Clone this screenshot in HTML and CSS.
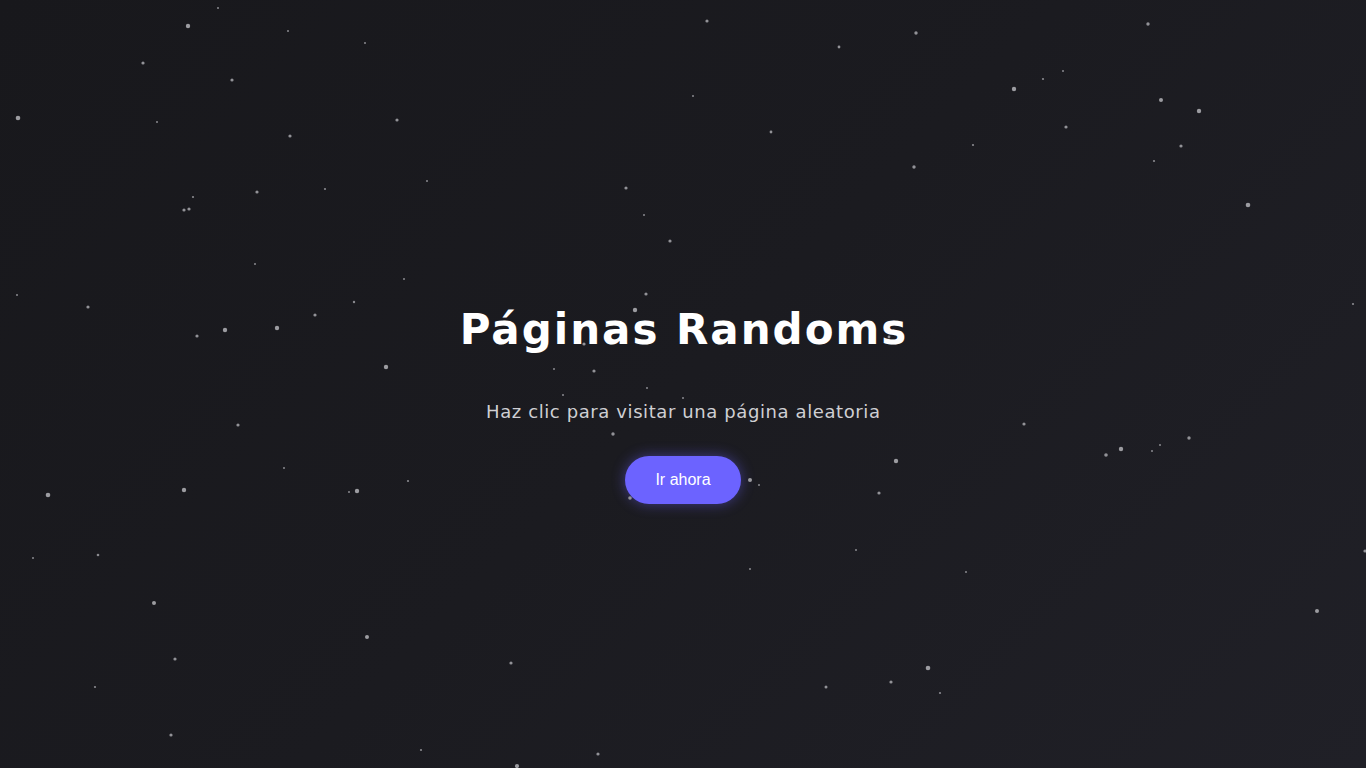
FILE: index.html
```html
<!DOCTYPE html>
<html lang="es">
<head>
<meta charset="utf-8">
<title>Páginas Randoms</title>
<link rel="stylesheet" href="styles.css">
</head>
<body>
<main class="hero">
  <h1 class="title">Páginas Randoms</h1>
  <p class="subtitle">Haz clic para visitar una página aleatoria</p>
  <button class="go-btn" type="button">Ir ahora</button>
</main>
<svg class="stars" viewBox="0 0 1366 768" aria-hidden="true">
  <g class="star-sm">
    <circle cx="218" cy="8" r="1"/><circle cx="288" cy="31" r="1"/><circle cx="365" cy="43" r="1"/>
    <circle cx="157" cy="122" r="1"/><circle cx="427" cy="181" r="1"/><circle cx="193" cy="197" r="1.1"/>
    <circle cx="325" cy="189" r="1.1"/><circle cx="255" cy="264" r="1"/><circle cx="404" cy="279" r="1"/>
    <circle cx="17" cy="295" r="1"/><circle cx="354" cy="302" r="1.2"/><circle cx="693" cy="96" r="1"/>
    <circle cx="644" cy="215" r="1"/><circle cx="554" cy="369" r="1"/><circle cx="1063" cy="71" r="1"/>
    <circle cx="1043" cy="79" r="1.1"/><circle cx="973" cy="145" r="1.1"/><circle cx="1154" cy="161" r="1.1"/>
    <circle cx="1353" cy="304" r="1.1"/><circle cx="284" cy="468" r="1"/><circle cx="349" cy="492" r="1"/>
    <circle cx="408" cy="481" r="1.1"/><circle cx="33" cy="558" r="1"/><circle cx="95" cy="687" r="1.1"/>
    <circle cx="421" cy="750" r="1.1"/><circle cx="563" cy="395" r="1"/><circle cx="647" cy="388" r="1"/>
    <circle cx="683" cy="398" r="1"/><circle cx="759" cy="485" r="1"/><circle cx="856" cy="550" r="1"/>
    <circle cx="750" cy="569" r="1"/><circle cx="1152" cy="451" r="1"/><circle cx="1160" cy="445" r="1"/>
    <circle cx="966" cy="572" r="1"/><circle cx="940" cy="693" r="1.1"/><circle cx="98" cy="555" r="1.3"/>
  </g>
  <g class="star-md">
    <circle cx="143" cy="63" r="1.6"/><circle cx="232" cy="80" r="1.6"/><circle cx="397" cy="120" r="1.6"/>
    <circle cx="290" cy="136" r="1.6"/><circle cx="257" cy="192" r="1.6"/><circle cx="184" cy="210" r="1.6"/>
    <circle cx="189" cy="209" r="1.6"/><circle cx="88" cy="307" r="1.6"/><circle cx="315" cy="315" r="1.6"/>
    <circle cx="197" cy="336" r="1.6"/><circle cx="707" cy="21" r="1.6"/><circle cx="839" cy="47" r="1.4"/>
    <circle cx="771" cy="132" r="1.4"/><circle cx="626" cy="188" r="1.6"/><circle cx="670" cy="241" r="1.6"/>
    <circle cx="646" cy="294" r="1.6"/><circle cx="584" cy="344" r="1.6"/><circle cx="594" cy="371" r="1.6"/>
    <circle cx="916" cy="33" r="1.7"/><circle cx="1148" cy="24" r="1.7"/><circle cx="1066" cy="127" r="1.6"/>
    <circle cx="1181" cy="146" r="1.6"/><circle cx="914" cy="167" r="1.7"/><circle cx="238" cy="425" r="1.6"/>
    <circle cx="175" cy="659" r="1.6"/><circle cx="171" cy="735" r="1.6"/><circle cx="613" cy="434" r="1.7"/>
    <circle cx="879" cy="493" r="1.6"/><circle cx="630" cy="498" r="1.8"/><circle cx="511" cy="663" r="1.6"/>
    <circle cx="826" cy="687" r="1.5"/><circle cx="891" cy="682" r="1.6"/><circle cx="598" cy="754" r="1.6"/>
    <circle cx="1024" cy="424" r="1.6"/><circle cx="1106" cy="455" r="1.8"/><circle cx="1189" cy="438" r="1.7"/>
    <circle cx="1365" cy="551" r="1.6"/><circle cx="889" cy="337" r="1.4"/>
  </g>
  <g class="star-lg">
    <circle cx="188" cy="26" r="2.2"/><circle cx="18" cy="118" r="2.3"/><circle cx="225" cy="330" r="2.2"/>
    <circle cx="277" cy="328" r="2.2"/><circle cx="386" cy="367" r="2.2"/><circle cx="635" cy="310" r="2.2"/>
    <circle cx="1014" cy="89" r="2.2"/><circle cx="1161" cy="100" r="2"/><circle cx="1199" cy="111" r="2.2"/>
    <circle cx="1248" cy="205" r="2.3"/><circle cx="48" cy="495" r="2.3"/><circle cx="184" cy="490" r="2.2"/>
    <circle cx="357" cy="491" r="2.2"/><circle cx="154" cy="603" r="2"/><circle cx="367" cy="637" r="2"/>
    <circle cx="896" cy="461" r="2.2"/><circle cx="750" cy="480" r="2"/><circle cx="517" cy="766" r="2.1"/>
    <circle cx="1121" cy="449" r="2.2"/><circle cx="1317" cy="611" r="2"/><circle cx="928" cy="668" r="2.3"/>
  </g>
</svg>
</body>
</html>
```

FILE: styles.css
```css
html, body {
  margin: 0;
  padding: 0;
  height: 100%;
}

body {
  background: linear-gradient(135deg, #18181c 0%, #1b1b20 50%, #202027 100%);
  font-family: "DejaVu Sans", "Inter", sans-serif;
  color: #ffffff;
  overflow: hidden;
  position: relative;
}

.hero {
  min-height: 100vh;
  display: flex;
  flex-direction: column;
  align-items: center;
  justify-content: center;
  text-align: center;
  box-sizing: border-box;
  padding-top: 36px;
}

.title {
  margin: 0;
  padding-left: 2px;
  font-family: "DejaVu Sans", sans-serif;
  font-size: 42px;
  line-height: 60px;
  font-weight: 700;
  letter-spacing: 2px;
  color: #ffffff;
}

.subtitle {
  margin: 38px 0 31px;
  padding-left: 0.6px;
  font-family: "DejaVu Sans", sans-serif;
  font-size: 18px;
  line-height: 27px;
  font-weight: 400;
  letter-spacing: 0.6px;
  color: #cfcfd3;
}

.go-btn {
  font-family: "Liberation Sans", Arial, sans-serif;
  font-size: 16px;
  line-height: 18px;
  color: #ffffff;
  background: #6c63ff;
  border: none;
  border-radius: 999px;
  padding: 15px 30px;
  box-shadow: 0 0 14px rgba(108, 99, 255, 0.45);
  cursor: pointer;
}

.stars {
  position: absolute;
  inset: 0;
  width: 100%;
  height: 100%;
  pointer-events: none;
}

.star-sm circle { fill: #8a8a8f; }
.star-md circle { fill: #929297; }
.star-lg circle { fill: #9c9ca1; }
```
